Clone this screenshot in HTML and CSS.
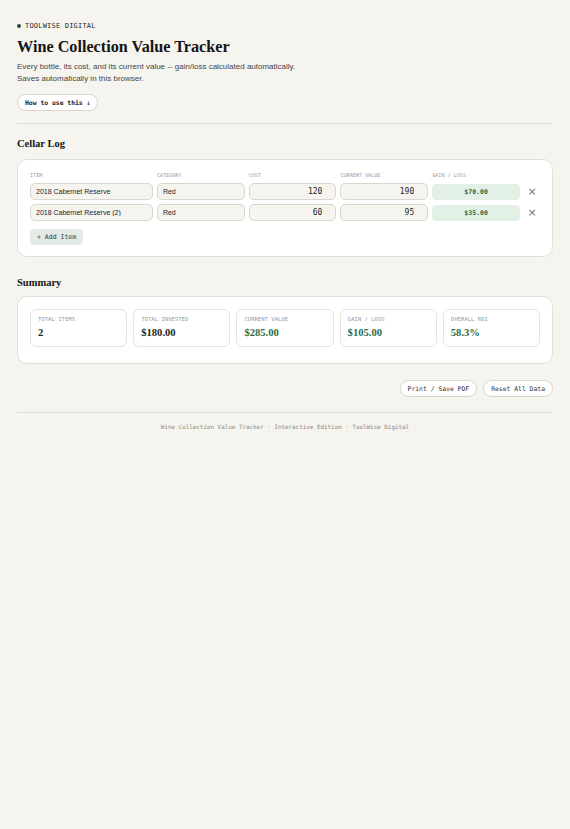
FILE: index.html
```html
<!DOCTYPE html>
<html lang="en">
<head>
<meta charset="utf-8">
<title>Wine Collection Value Tracker</title>
<link rel="stylesheet" href="styles.css">
</head>
<body>
<div class="page">
  <header class="hero">
    <div class="brand"><span class="dot"></span>TOOLWISE DIGITAL</div>
    <h1 class="title">Wine Collection Value Tracker</h1>
    <p class="lead">Every bottle, its cost, and its current value -- gain/loss calculated automatically.<br>Saves automatically in this browser.</p>
    <button class="pill pill-bold">How to use this ↓</button>
  </header>

  <section class="section">
    <h2 class="heading">Cellar Log</h2>
    <div class="card">
      <div class="grid">
        <div class="col-label">ITEM</div>
        <div class="col-label">CATEGORY</div>
        <div class="col-label">COST</div>
        <div class="col-label">CURRENT VALUE</div>
        <div class="col-label">GAIN / LOSS</div>
        <div></div>

        <input class="field" type="text" value="2018 Cabernet Reserve">
        <input class="field" type="text" value="Red">
        <input class="field num" type="text" value="120">
        <input class="field num" type="text" value="190">
        <div class="gain">$70.00</div>
        <button class="remove">×</button>

        <input class="field" type="text" value="2018 Cabernet Reserve (2)">
        <input class="field" type="text" value="Red">
        <input class="field num" type="text" value="60">
        <input class="field num" type="text" value="95">
        <div class="gain">$35.00</div>
        <button class="remove">×</button>
      </div>
      <button class="add">+ Add Item</button>
    </div>
  </section>

  <section class="section section-summary">
    <h2 class="heading">Summary</h2>
    <div class="card stats">
      <div class="stat"><div class="stat-label">TOTAL ITEMS</div><div class="stat-value">2</div></div>
      <div class="stat"><div class="stat-label">TOTAL INVESTED</div><div class="stat-value">$180.00</div></div>
      <div class="stat"><div class="stat-label">CURRENT VALUE</div><div class="stat-value green">$285.00</div></div>
      <div class="stat"><div class="stat-label">GAIN / LOSS</div><div class="stat-value green">$105.00</div></div>
      <div class="stat"><div class="stat-label">OVERALL ROI</div><div class="stat-value green">58.3%</div></div>
    </div>
  </section>

  <div class="actions">
    <button class="pill">Print / Save PDF</button>
    <button class="pill">Reset All Data</button>
  </div>

  <footer class="footer">Wine Collection Value Tracker · Interactive Edition · ToolWise Digital</footer>
</div>
</body>
</html>
```

FILE: styles.css
```css
* { box-sizing: border-box; }
html, body { margin: 0; padding: 0; }
body {
  background: #f5f4ef;
  color: #1b1b1b;
  font-family: "Liberation Sans", Arial, sans-serif;
}
.page {
  padding: 21px 17px 40px;
}
.hero {
  display: flex;
  flex-direction: column;
  align-items: flex-start;
  padding-bottom: 12px;
  border-bottom: 1px solid #e2dfd6;
}
.brand {
  display: flex;
  align-items: center;
  gap: 4px;
  font-family: "DejaVu Sans Mono", monospace;
  font-size: 7px;
  letter-spacing: 0.2px;
  color: #2a2a2a;
  height: 10px;
}
.dot {
  width: 4px;
  height: 4px;
  border-radius: 50%;
  background: #2c4a36;
}
.title {
  font-family: "Liberation Serif", "Times New Roman", serif;
  font-weight: 700;
  font-size: 16.2px;
  line-height: 20px;
  margin: 6px 0 4px;
  color: #151515;
}
.lead {
  margin: 0 0 9px;
  font-size: 8px;
  line-height: 12px;
  color: #454545;
}
.pill {
  font-family: "DejaVu Sans Mono", monospace;
  font-size: 6.4px;
  color: #333;
  background: #fff;
  border: 1px solid #d8d5cb;
  border-radius: 10px;
  height: 17px;
  padding: 0 7px;
  cursor: pointer;
  display: inline-flex;
  align-items: center;
}
.pill-bold {
  font-weight: 700;
  color: #1c1c1c;
}
.section {
  margin-top: 13px;
}
.section-summary {
  margin-top: 19px;
}
.heading {
  font-family: "Liberation Serif", "Times New Roman", serif;
  font-weight: 700;
  font-size: 10.5px;
  line-height: 14px;
  margin: 0 0 8px;
  color: #151515;
}
.section-summary .heading {
  margin-bottom: 6px;
}
.card {
  background: #fff;
  border: 1.5px solid #e2dfd4;
  border-radius: 10px;
  padding: 11px 12px 11px;
}
.grid {
  display: grid;
  grid-template-columns: 1.4fr 1fr 1fr 1fr 1fr 16px;
  column-gap: 4px;
  row-gap: 4px;
  align-items: center;
}
.col-label {
  font-family: "DejaVu Sans Mono", monospace;
  font-size: 5.1px;
  color: #9a9a9a;
  height: 8px;
  line-height: 8px;
}
.field {
  width: 100%;
  height: 17px;
  background: #f5f4ef;
  border: 1px solid #d9d6cc;
  border-radius: 5px;
  font-family: "Liberation Sans", Arial, sans-serif;
  font-size: 7px;
  color: #1e1e1e;
  padding: 0 5px;
  outline: none;
}
.field.num {
  text-align: right;
  font-family: "DejaVu Sans Mono", monospace;
  font-size: 8px;
  padding-right: 13px;
}
.gain {
  height: 16px;
  background: #e2f0e5;
  border-radius: 4px;
  color: #2c6a46;
  font-family: "DejaVu Sans Mono", monospace;
  font-weight: 700;
  font-size: 6.5px;
  display: flex;
  align-items: center;
  justify-content: center;
}
.remove {
  background: none;
  border: 0;
  padding: 0;
  color: #777;
  font-size: 11px;
  line-height: 1;
  font-family: "DejaVu Sans", sans-serif;
  cursor: pointer;
}
.add {
  margin-top: 8px;
  height: 16px;
  padding: 0 7px;
  background: #e4ebe6;
  border: 0;
  border-radius: 4px;
  font-family: "DejaVu Sans Mono", monospace;
  font-size: 6.5px;
  color: #2a3a30;
  cursor: pointer;
}
.stats {
  display: grid;
  grid-template-columns: repeat(5, 1fr);
  gap: 6px;
  padding: 12px 12px 16px;
}
.stat {
  border: 1px solid #e6e3da;
  border-radius: 6px;
  padding: 5px 7px 6px;
  height: 38px;
}
.stat-label {
  font-family: "DejaVu Sans Mono", monospace;
  font-size: 5.6px;
  color: #9a9a9a;
  line-height: 8px;
}
.stat-value {
  font-family: "Liberation Serif", "Times New Roman", serif;
  font-weight: 700;
  font-size: 10.6px;
  line-height: 14px;
  margin-top: 3px;
  color: #1c2620;
}
.stat-value.green {
  color: #2c6a46;
}
.actions {
  display: flex;
  justify-content: flex-end;
  gap: 6px;
  margin-top: 16px;
  padding-bottom: 15px;
  border-bottom: 1px solid #e2dfd6;
}
.footer {
  text-align: center;
  font-family: "DejaVu Sans Mono", monospace;
  font-size: 5.9px;
  color: #8a8a8a;
  margin-top: 11px;
}
```
